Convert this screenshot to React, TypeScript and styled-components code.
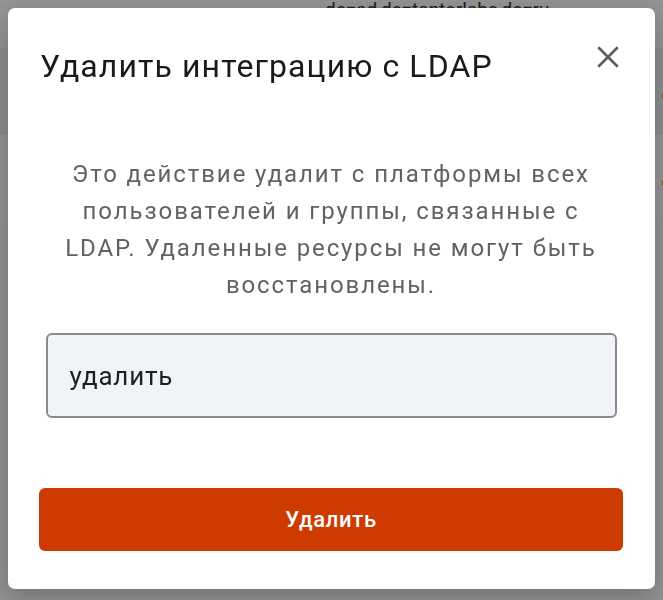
import styled, { createGlobalStyle } from "styled-components"

const GlobalStyle = createGlobalStyle`
    html, body {
        margin: 0;
        padding: 0;
        height: 100%;
    }
    body {
        font-family: Roboto, "Noto Sans", "DejaVu Sans", sans-serif;
        background: #f4f4f4;
        overflow: hidden;
    }
`

const Page = styled.div`
    display: flex;
    flex-direction: column;
    height: 600px;
    background: #f6f6f6;
`

const PageRow = styled.div<{ $h: number; $tone: string }>`
    height: ${p => p.$h}px;
    background: ${p => p.$tone};
    display: flex;
    justify-content: flex-end;
    align-items: center;
    padding: 0 0 0 325px;
    font-size: 22px;
    color: #333;
    white-space: nowrap;
    overflow: hidden;
`

const PageTopText = styled.span`
    flex: 1;
    margin-top: -30px;
    font-size: 19px;
`

const PageEdgeText = styled.span`
    margin-right: -10px;
    margin-top: 6px;
`

const Overlay = styled.div`
    position: fixed;
    inset: 0;
    background: rgba(0, 0, 0, 0.4);
    display: flex;
    justify-content: center;
    padding-top: 8px;
`

const Modal = styled.div`
    width: 647px;
    height: 581px;
    box-sizing: border-box;
    background: #fff;
    border-radius: 7px;
    box-shadow: 0 8px 28px rgba(0, 0, 0, 0.25);
    padding: 34px 32px 38px 31px;
    display: flex;
    flex-direction: column;
`

const Header = styled.div`
    display: flex;
    align-items: flex-start;
    justify-content: space-between;
`

const Title = styled.h2`
    margin: 0;
    padding-left: 1px;
    font-size: 32px;
    line-height: 48px;
    font-weight: 400;
    letter-spacing: 1.1px;
    color: #1a1a1a;
`

const CloseButton = styled.button`
    border: 0;
    background: none;
    padding: 0;
    width: 30px;
    height: 30px;
    display: flex;
    align-items: center;
    justify-content: center;
    color: #5f5f5f;
    cursor: pointer;
`

const Body = styled.div`
    flex: 1;
    display: flex;
    flex-direction: column;
    align-items: center;
    padding: 66px 0 0;
`

const Description = styled.p`
    margin: 0;
    width: 562px;
    text-align: center;
    font-size: 24px;
    line-height: 37px;
    letter-spacing: 1.9px;
    color: #626262;
`

const Field = styled.input`
    margin-top: 29px;
    width: 571px;
    height: 85px;
    box-sizing: border-box;
    border: 2px solid #8b8b8b;
    border-radius: 6px;
    background: #f0f3f8;
    padding: 0 22px;
    font-family: inherit;
    font-size: 26px;
    letter-spacing: 0.8px;
    color: #1e1e1e;
    caret-color: #c23a0c;
    outline: none;
`

const DeleteButton = styled.button`
    width: 100%;
    height: 63px;
    border: 0;
    border-radius: 6px;
    background: #cd3b01;
    color: #fff;
    font-family: inherit;
    font-size: 22px;
    font-weight: 500;
    letter-spacing: 0.7px;
    cursor: pointer;
`

const App = () => {
    return (
        <>
            <GlobalStyle />
            <Page>
                <PageRow $h={48} $tone="#f7f7f7">
                    <PageTopText>dc=ad,dc=tantorlabs,dc=ru</PageTopText>
                </PageRow>
                <PageRow $h={87} $tone="#ececec">
                    <PageEdgeText>c</PageEdgeText>
                </PageRow>
                <PageRow $h={87} $tone="#f7f7f7">
                    <PageEdgeText>c</PageEdgeText>
                </PageRow>
                <PageRow $h={378} $tone="#f4f4f4" />
            </Page>
            <Overlay>
                <Modal role="dialog">
                    <Header>
                        <Title>Удалить интеграцию с LDAP</Title>
                        <CloseButton aria-label="Закрыть">
                            <svg width="26" height="26" viewBox="0 0 24 24" fill="none" stroke="currentColor" strokeWidth="2.5">
                                <path d="M3 3 L21 21 M21 3 L3 21" />
                            </svg>
                        </CloseButton>
                    </Header>
                    <Body>
                        <Description>
                            Это действие удалит с платформы всех пользователей и группы, связанные с LDAP. Удаленные ресурсы не могут быть восстановлены.
                        </Description>
                        <Field defaultValue="удалить" autoFocus />
                    </Body>
                    <DeleteButton>Удалить</DeleteButton>
                </Modal>
            </Overlay>
        </>
    )
}

export default App
